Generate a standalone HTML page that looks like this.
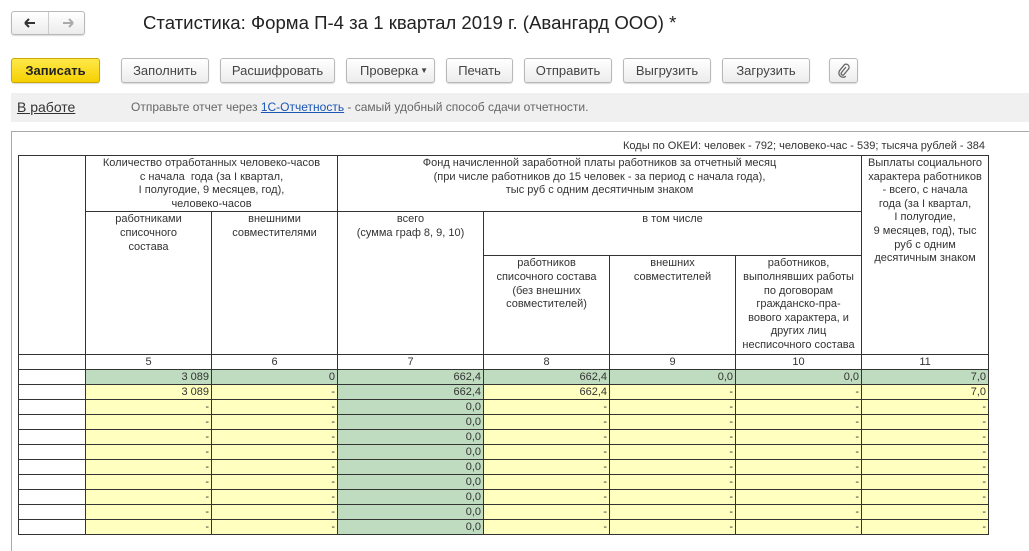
<!DOCTYPE html>
<html><head><meta charset="utf-8"><style>
*{box-sizing:border-box;margin:0;padding:0}
body{width:1029px;height:545px;background:#fff;font-family:"Liberation Sans",Arial,sans-serif;position:relative;overflow:hidden;color:#333}
.btn{position:absolute;top:58px;height:25px;border:1px solid #b8b8b8;border-radius:3px;background:linear-gradient(#fff,#ececec);font-size:13px;color:#444;text-align:center;line-height:23px;box-shadow:0 1px 1px rgba(0,0,0,.15)}
.nav{position:absolute;top:11px;left:11px;width:74px;height:24px;border:1px solid #b8b8b8;border-radius:3px;background:linear-gradient(#fff,#ececec);box-shadow:0 1px 1px rgba(0,0,0,.15)}
table{position:absolute;left:18px;top:155px;width:970px;border-collapse:collapse;table-layout:fixed;font-size:11px;color:#333}
td{border:1px solid #333;vertical-align:top;text-align:center;line-height:13.6px;padding:1px 1px 0;overflow:hidden;white-space:nowrap}
tr.n td{height:15px;line-height:13px;padding:0 1px;vertical-align:middle}
tr.d td{height:15px;line-height:13px;padding:0 2px 0 0;text-align:right;vertical-align:middle;background:#ffffc0}
tr.d td.w{background:#fff}
tr.d td.g{background:#c0dcc0}
</style></head><body>
<div class="nav"><div style="position:absolute;left:36px;top:0;width:1px;height:22px;background:#ccc"></div></div>
<svg style="position:absolute;left:20px;top:16px" width="60" height="14"><path d="M5 7h10M5 7l4-4M5 7l4 4" stroke="#333" stroke-width="2" fill="none"/><path d="M43 7h10M53 7l-4-4M53 7l-4 4" stroke="#aaa" stroke-width="2" fill="none"/></svg>
<div style="position:absolute;left:143px;top:12px;font-size:18.6px;color:#222">Статистика: Форма П-4 за 1 квартал 2019 г. (Авангард ООО) *</div>

<div class="btn" style="left:11px;width:89px;background:linear-gradient(#ffe94a,#f5d000);border-color:#c9a800;color:#222;font-weight:bold">Записать</div>
<div class="btn" style="left:121px;width:88px">Заполнить</div>
<div class="btn" style="left:220px;width:115px">Расшифровать</div>
<div class="btn" style="left:346px;width:89px;text-align:left;padding-left:13px">Проверка <span style="font-size:8px;position:absolute;right:6px;top:0">&#9660;</span></div>
<div class="btn" style="left:446px;width:67px">Печать</div>
<div class="btn" style="left:524px;width:88px">Отправить</div>
<div class="btn" style="left:623px;width:88px">Выгрузить</div>
<div class="btn" style="left:722px;width:88px">Загрузить</div>
<div class="btn" style="left:829px;width:29px"><svg width="14" height="16" style="margin-top:4px" viewBox="0 0 14 16"><path d="M9 4L4.5 9.5a1.6 1.6 0 0 0 2.3 2.2L11.5 6a3 3 0 0 0-4.2-4.2L2.8 7.3a4.3 4.3 0 0 0 6.1 6" stroke="#666" stroke-width="1.3" fill="none"/></svg></div>

<div style="position:absolute;left:11px;top:93px;width:1018px;height:29px;background:#f0f0f0"></div>
<div style="position:absolute;left:17px;top:99px;font-size:14px;color:#333;text-decoration:underline">В работе</div>
<div style="position:absolute;left:131px;top:100px;font-size:12px;color:#666">Отправьте отчет через <span style="color:#1a55b5;text-decoration:underline">1С-Отчетность</span> - самый удобный способ сдачи отчетности.</div>

<div style="position:absolute;left:11px;top:131px;width:1030px;height:420px;border-top:1px solid #aaa;border-left:1px solid #aaa"></div>
<div style="position:absolute;right:44px;top:140px;font-size:11px;color:#333">Коды по ОКЕИ: человек - 792; человеко-час - 539; тысяча рублей - 384</div>

<table>
<colgroup><col style="width:67px"><col style="width:126px"><col style="width:126px"><col style="width:146px"><col style="width:126px"><col style="width:126px"><col style="width:126px"><col style="width:127px"></colgroup>
<tr style="height:56px"><td rowspan="3"></td><td colspan="2">Количество отработанных человеко-часов<br>с начала&nbsp; года (за I квартал,<br>I полугодие, 9 месяцев, год),<br>человеко-часов</td><td colspan="4">Фонд начисленной заработной платы работников за отчетный месяц<br>(при числе работников до 15 человек - за период с начала года),<br>тыс руб с одним десятичным знаком</td><td rowspan="3">Выплаты социального<br>характера работников<br>- всего, с начала<br>года (за I квартал,<br>I полугодие,<br>9 месяцев, год), тыс<br>руб с одним<br>десятичным знаком</td></tr>
<tr style="height:44px"><td rowspan="2">работниками<br>списочного<br>состава</td><td rowspan="2">внешними<br>совместителями</td><td rowspan="2">всего<br>(сумма граф 8, 9, 10)</td><td colspan="3">в том числе</td></tr>
<tr style="height:99px"><td>работников<br>списочного состава<br>(без внешних<br>совместителей)</td><td>внешних<br>совместителей</td><td>работников,<br>выполнявших работы<br>по договорам<br>гражданско-пра-<br>вового характера, и<br>других лиц<br>несписочного состава</td></tr>
<tr class="n"><td></td><td>5</td><td>6</td><td>7</td><td>8</td><td>9</td><td>10</td><td>11</td></tr>
<tr class="d"><td class="w"></td><td class="g">3 089</td><td class="g">0</td><td class="g">662,4</td><td class="g">662,4</td><td class="g">0,0</td><td class="g">0,0</td><td class="g">7,0</td></tr>
<tr class="d"><td class="w"></td><td>3 089</td><td>-</td><td class="g">662,4</td><td>662,4</td><td>-</td><td>-</td><td>7,0</td></tr>
<tr class="d"><td class="w"></td><td>-</td><td>-</td><td class="g">0,0</td><td>-</td><td>-</td><td>-</td><td>-</td></tr>
<tr class="d"><td class="w"></td><td>-</td><td>-</td><td class="g">0,0</td><td>-</td><td>-</td><td>-</td><td>-</td></tr>
<tr class="d"><td class="w"></td><td>-</td><td>-</td><td class="g">0,0</td><td>-</td><td>-</td><td>-</td><td>-</td></tr>
<tr class="d"><td class="w"></td><td>-</td><td>-</td><td class="g">0,0</td><td>-</td><td>-</td><td>-</td><td>-</td></tr>
<tr class="d"><td class="w"></td><td>-</td><td>-</td><td class="g">0,0</td><td>-</td><td>-</td><td>-</td><td>-</td></tr>
<tr class="d"><td class="w"></td><td>-</td><td>-</td><td class="g">0,0</td><td>-</td><td>-</td><td>-</td><td>-</td></tr>
<tr class="d"><td class="w"></td><td>-</td><td>-</td><td class="g">0,0</td><td>-</td><td>-</td><td>-</td><td>-</td></tr>
<tr class="d"><td class="w"></td><td>-</td><td>-</td><td class="g">0,0</td><td>-</td><td>-</td><td>-</td><td>-</td></tr>
<tr class="d"><td class="w"></td><td>-</td><td>-</td><td class="g">0,0</td><td>-</td><td>-</td><td>-</td><td>-</td></tr>
</table>
</body></html>
